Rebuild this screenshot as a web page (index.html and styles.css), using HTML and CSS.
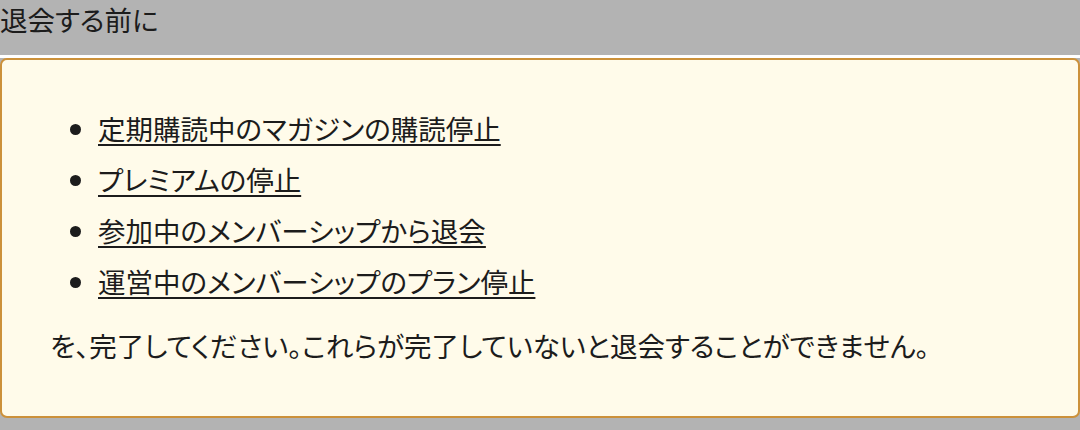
FILE: index.html
```html
<!DOCTYPE html>
<html lang="ja">
<head>
<meta charset="utf-8">
<link rel="stylesheet" href="styles.css">
</head>
<body>
<div class="page">
  <h2 class="title">退会する前に</h2>
  <div class="notice">
    <ul class="tasks">
      <li><a href="#">定期購読中のマガジンの購読停止</a></li>
      <li><a href="#">プレミアムの停止</a></li>
      <li><a href="#">参加中のメンバーシップから退会</a></li>
      <li><a href="#">運営中のメンバーシップのプラン停止</a></li>
    </ul>
    <p class="note">を、完了してください。これらが完了していないと退会することができません。</p>
  </div>
</div>
</body>
</html>
```

FILE: styles.css
```css
html, body {
  margin: 0;
  padding: 0;
}
body {
  background: #b3b3b3;
  font-family: "Noto Sans CJK JP", "Noto Sans", sans-serif;
  font-feature-settings: "palt";
  color: #1c1c1c;
}
.page {
  display: flex;
  flex-direction: column;
}
.title {
  margin: 0;
  height: 55px;
  font-size: 27.5px;
  font-weight: 400;
  line-height: 38px;
  background: #b3b3b3;
  border-bottom: 3px solid #ffffff;
}
.notice {
  background: #fffbea;
  border: 2px solid #cc913a;
  border-radius: 7px;
  height: 356px;
  padding: 0 48px;
}
.tasks {
  margin: 0;
  padding: 43px 0 0 48px;
  list-style: disc;
}
.tasks li {
  font-size: 27.5px;
  line-height: 51px;
}
.tasks a {
  color: #1c1c1c;
  text-decoration: underline;
  text-decoration-thickness: 2px;
  text-underline-offset: 4px;
}
.note {
  margin: 18px 0 0 0;
  font-size: 27.5px;
  line-height: 40px;
}
```
